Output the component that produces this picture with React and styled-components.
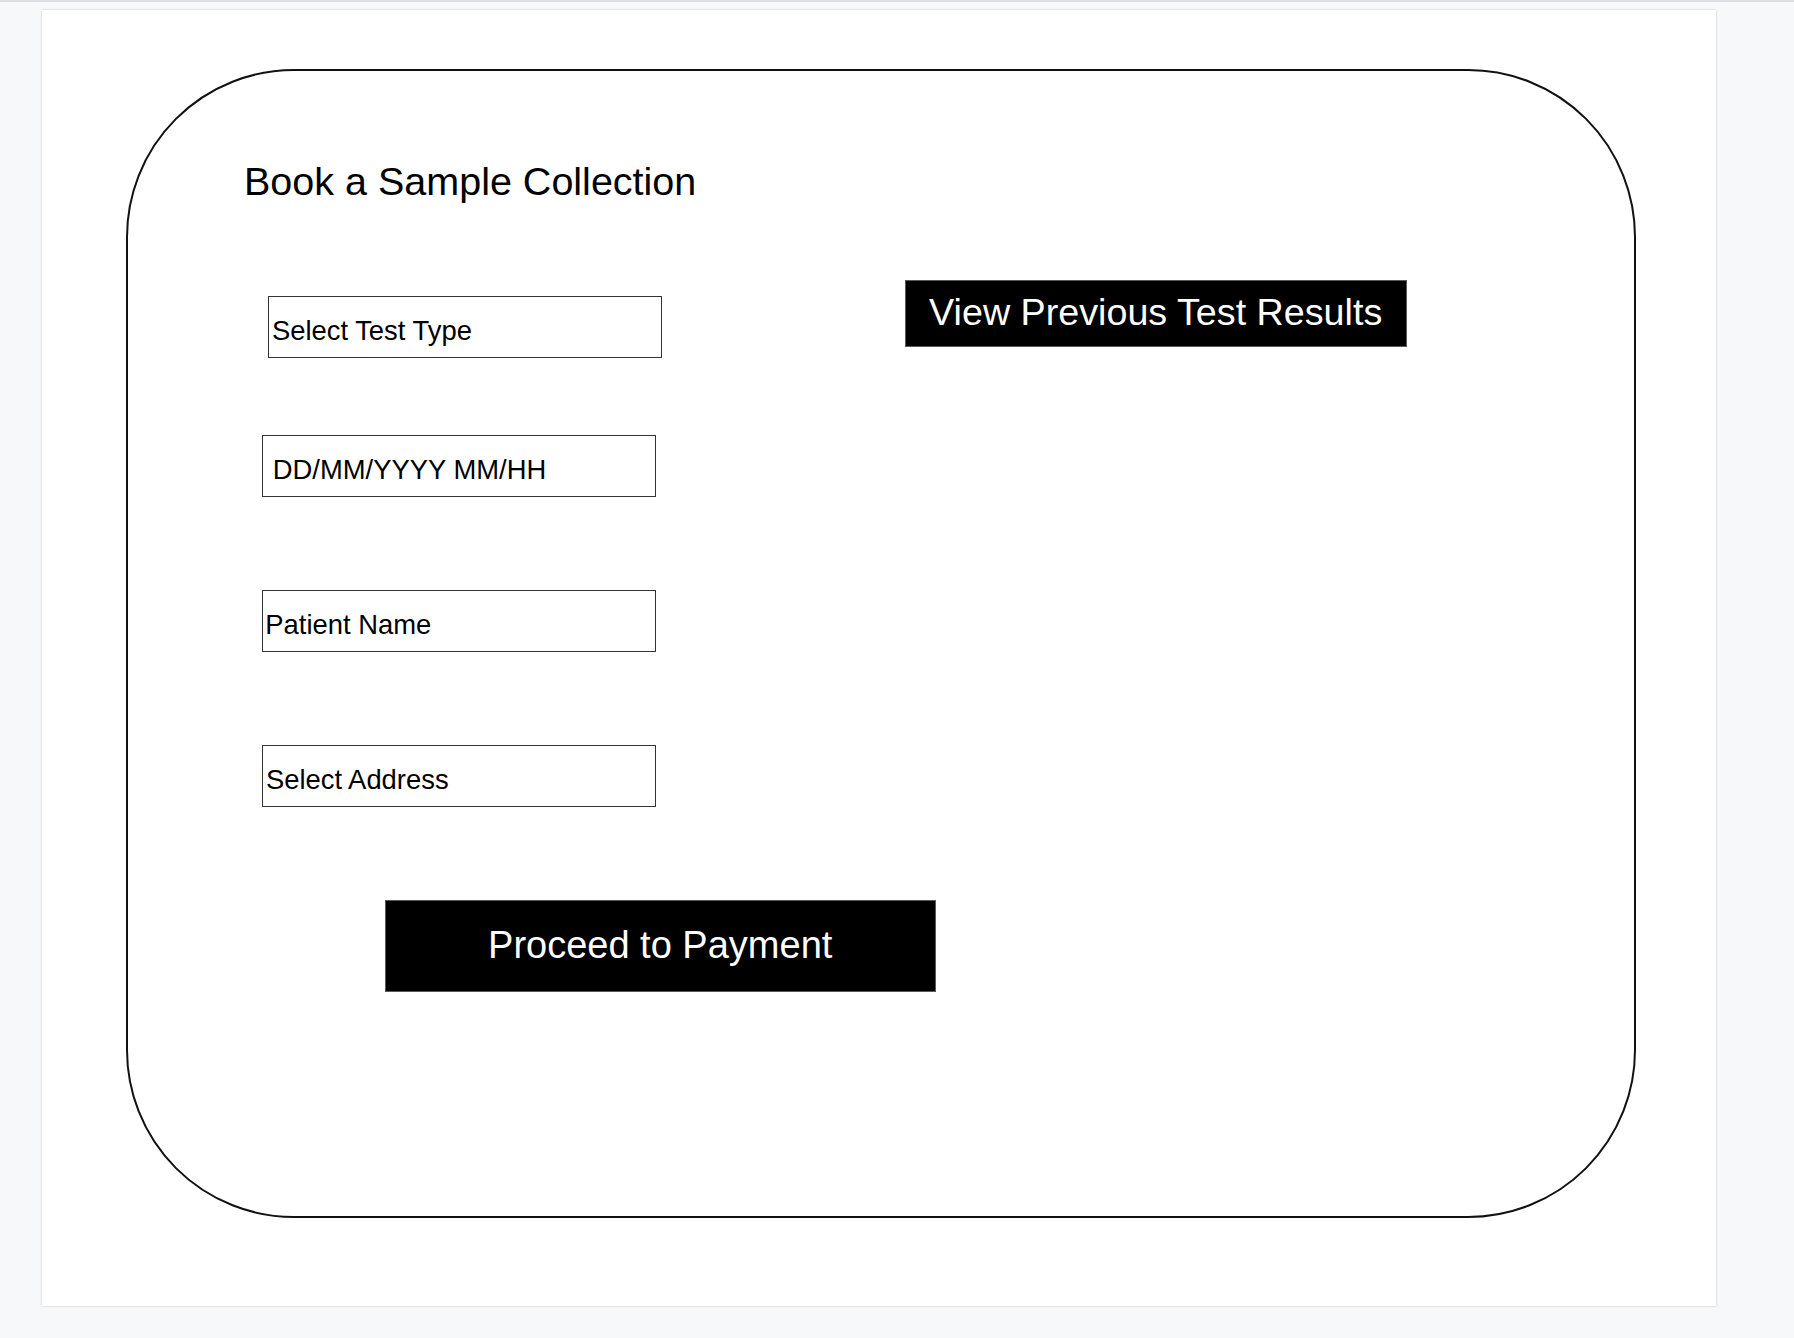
import React from "react";
import styled, { createGlobalStyle } from "styled-components";

const GlobalStyle = createGlobalStyle`
  html, body {
    margin: 0;
    padding: 0;
    background: #f7f8fa;
    font-family: "Liberation Sans", Arial, Helvetica, sans-serif;
  }
  * { box-sizing: border-box; }
`;

const Viewport = styled.div`
  min-height: 1338px;
  border-top: 2px solid #dcdee2;
  padding: 8px 0 0 42px;
`;

const Sheet = styled.div`
  width: 1674px;
  height: 1296px;
  background: #ffffff;
  box-shadow: 0 0 2px rgba(0, 0, 0, 0.22);
  padding: 59px 0 0 83.5px;
`;

const Card = styled.div`
  width: 1510px;
  height: 1149px;
  border: 2px solid #111;
  border-radius: 168px;
  padding: 88px 0 0 114.5px;
  display: flex;
  flex-direction: column;
  align-items: flex-start;
`;

const Title = styled.h1`
  margin: 0 0 0 2px;
  font-size: 39.5px;
  line-height: 45px;
  font-weight: 400;
  color: #000;
`;

const TopSection = styled.div`
  display: flex;
  align-items: flex-start;
  margin-top: 76px;
  margin-left: 20px;
`;

const FieldList = styled.div`
  width: 400px;
  display: flex;
  flex-direction: column;
  align-items: flex-start;
  padding-top: 16px;
`;

const Field = styled.div`
  width: 394px;
  height: 62px;
  border: 1.5px solid #333;
  margin-top: ${(p) => p.$gap || 0}px;
  margin-left: ${(p) => p.$indent || 0}px;
  padding: 19px 0 0 ${(p) => p.$pad || 0}px;
  font-size: 27.4px;
  line-height: 30px;
  color: #000;
  white-space: nowrap;
`;

const DarkButton = styled.button`
  background: #000;
  color: #fff;
  border: 1px solid #5a5a5a;
  border-radius: 0;
  font-family: "Liberation Sans", Arial, Helvetica, sans-serif;
  font-size: 38px;
  line-height: 40px;
  display: flex;
  align-items: center;
  justify-content: center;
  white-space: nowrap;
  padding: 0;
  cursor: pointer;
`;

const ResultsButton = styled(DarkButton)`
  width: 502px;
  height: 67px;
  margin-left: 242.7px;
  padding-bottom: 3px;
  font-size: 37.7px;
`;

const PaymentButton = styled(DarkButton)`
  width: 551px;
  height: 92px;
  margin-top: 93.3px;
  margin-left: 142.7px;
  padding-bottom: 2.6px;
`;

export default function App() {
  return (
    <>
      <GlobalStyle />
      <Viewport>
        <Sheet>
          <Card>
            <Title>Book a Sample Collection</Title>
            <TopSection>
              <FieldList>
                <Field $indent={6} $pad={2.9}>Select Test Type</Field>
                <Field $gap={77} $pad={9.8}>DD/MM/YYYY MM/HH</Field>
                <Field $gap={93} $pad={2.3}>Patient Name</Field>
                <Field $gap={93} $pad={2.9}>Select Address</Field>
              </FieldList>
              <ResultsButton>View Previous Test Results</ResultsButton>
            </TopSection>
            <PaymentButton>Proceed to Payment</PaymentButton>
          </Card>
        </Sheet>
      </Viewport>
    </>
  );
}
